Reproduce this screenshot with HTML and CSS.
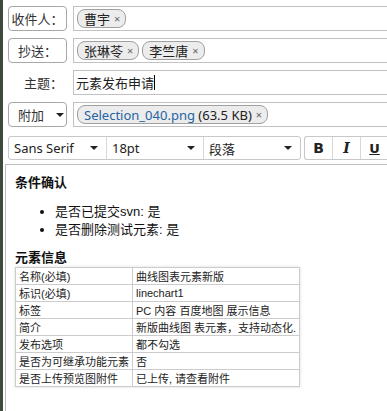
FILE: index.html
```html
<html>
<head>
<meta charset="utf-8" />
<title>元素发布申请</title>
<link rel="stylesheet" href="styles.css">
</head>
<body>
<div class="compose">
	<div class="field">
		<button class="lbl-btn">收件人：</button>
		<div class="box"><span class="chip">曹宇<span class="x">×</span></span></div>
	</div>
	<div class="field">
		<button class="lbl-btn">抄送：</button>
		<div class="box">
			<span class="chip">张琳苓<span class="x">×</span></span>
			<span class="chip">李竺唐<span class="x">×</span></span>
		</div>
	</div>
	<div class="field">
		<label class="lbl">主题：</label>
		<div class="box subject">元素发布申请<span class="cursor"></span></div>
	</div>
	<div class="field last">
		<button class="lbl-btn drop">附加<span class="caret"></span></button>
		<div class="box"><span class="chip file"><span class="fname">Selection_040.png</span>&nbsp;(63.5 KB)<span class="x">×</span></span></div>
	</div>
	<div class="toolbar">
		<div class="group">
			<div class="sel font">Sans Serif<span class="caret"></span></div>
			<div class="sel size">18pt<span class="caret"></span></div>
			<div class="sel para">段落<span class="caret"></span></div>
		</div>
		<div class="group fmt">
			<span class="tb bold">B</span>
			<span class="tb ital">I</span>
			<span class="tb und">U</span>
		</div>
	</div>
</div>
<div class="editor">
	<h3>条件确认</h3>
	<ul>
		<li>是否已提交svn: 是</li>
		<li>是否删除测试元素: 是</li>
	</ul>
	<h3 class="h-info">元素信息</h3>
	<table>
		<tr><td class="k">名称(必填)</td><td>曲线图表元素新版</td></tr>
		<tr><td class="k">标识(必填)</td><td>linechart1</td></tr>
		<tr><td class="k">标签</td><td>PC 内容 百度地图 展示信息</td></tr>
		<tr><td class="k">简介</td><td>新版曲线图 表元素，支持动态化.</td></tr>
		<tr><td class="k">发布选项</td><td>都不勾选</td></tr>
		<tr><td class="k">是否为可继承功能元素</td><td>否</td></tr>
		<tr><td class="k">是否上传预览图附件</td><td>已上传, 请查看附件</td></tr>
	</table>
</div>
</body>
</html>
```
FILE: styles.css
```css
body {
	margin: 0;
	height: 100vh;
	box-sizing: border-box;
	display: flex;
	flex-direction: column;
	border-left: 3px solid #3e4a3e;
	background-color: #ffffff;
	color: #222;
	font-family: "Noto Sans", "Noto Sans CJK SC", sans-serif;
	font-size: 13px;
	overflow: hidden;
}

.compose {
	padding: 6px 0 0 5px;
}

.field {
	display: flex;
	gap: 6px;
	height: 25px;
	margin-bottom: 7px;
}

.field.last {
	margin-bottom: 9px;
}

.lbl-btn {
	width: 59px;
	flex: none;
	padding: 0;
	background: #fff;
	border: 1px solid #a8a8a8;
	border-radius: 4px;
	color: #333;
	font-family: "Noto Sans CJK SC", sans-serif;
	font-size: 13px;
	white-space: nowrap;
}

.lbl-btn.drop {
	display: flex;
	align-items: center;
	padding-left: 9px;
	gap: 12px;
}

.lbl {
	width: 55px;
	flex: none;
	padding-right: 4px;
	text-align: right;
	line-height: 25px;
	color: #333;
	font-family: "Noto Sans CJK SC", sans-serif;
}

.box {
	flex: 1;
	display: flex;
	align-items: center;
	gap: 3px;
	padding-left: 3px;
	border: 1px solid #c2c2c2;
	border-right: none;
}

.subject {
	gap: 0;
	padding-left: 2px;
	font-family: "Noto Sans CJK SC", sans-serif;
	color: #222;
}

.cursor {
	display: inline-block;
	width: 1px;
	height: 15px;
	background: #000;
}

.chip {
	display: inline-flex;
	align-items: center;
	height: 17px;
	padding: 0 5px 0 6px;
	border: 1px solid #a0a0a0;
	border-radius: 8px;
	background: #ececec;
	color: #222;
	font-family: "Noto Sans", "Noto Sans CJK SC", sans-serif;
	white-space: nowrap;
}

.chip .x {
	margin-left: 4px;
	color: #666;
	font-size: 11px;
}

.fname {
	color: #2464a4;
}

.caret {
	display: inline-block;
	flex: none;
	width: 0;
	height: 0;
	border-left: 4px solid transparent;
	border-right: 4px solid transparent;
	border-top: 4px solid #222;
}

.toolbar {
	display: flex;
	gap: 3px;
	height: 24px;
	margin-bottom: 4px;
}

.group {
	display: flex;
	border: 1px solid #c8c8c8;
	border-radius: 3px;
}

.sel {
	box-sizing: border-box;
	width: 97px;
	display: flex;
	align-items: center;
	justify-content: space-between;
	padding: 0 8px 0 5px;
	color: #222;
}

.sel + .sel {
	border-left: 1px solid #d8d8d8;
}

.sel.para {
	font-family: "Noto Sans CJK SC", sans-serif;
}

.fmt {
	border-right: none;
	border-radius: 3px 0 0 3px;
	flex: 1;
}

.tb {
	width: 27px;
	display: flex;
	align-items: center;
	justify-content: center;
	color: #222;
	font-family: "DejaVu Sans", sans-serif;
	font-size: 14px;
	font-weight: bold;
}

.tb + .tb {
	border-left: 1px solid #d8d8d8;
}

.ital {
	font-style: italic;
	font-family: "DejaVu Serif", serif;
}

.und {
	text-decoration: underline;
	font-size: 13px;
}

.editor {
	flex: 1;
	margin-left: 2px;
	border-left: 1px solid #bdbdbd;
	border-top: 1px solid #bdbdbd;
	padding: 10px 9px;
	font-family: "Liberation Sans", "Noto Sans CJK SC", sans-serif;
	color: #111;
}

h3 {
	margin: 0;
	font-size: 13px;
	line-height: 16px;
	font-weight: bold;
}

ul {
	margin: 12px 0 11px;
	padding-left: 40px;
	font-size: 13px;
	line-height: 18px;
}

.h-info {
	margin-bottom: 1px;
}

table {
	width: 283px;
	border-collapse: collapse;
	font-size: 11px;
	box-shadow: 0 0 3px rgba(0, 0, 0, 0.15);
}

td {
	height: 16px;
	padding: 0 3px;
	border: 1px solid #cccccc;
	white-space: nowrap;
}

td.k {
	width: 108px;
}
```
